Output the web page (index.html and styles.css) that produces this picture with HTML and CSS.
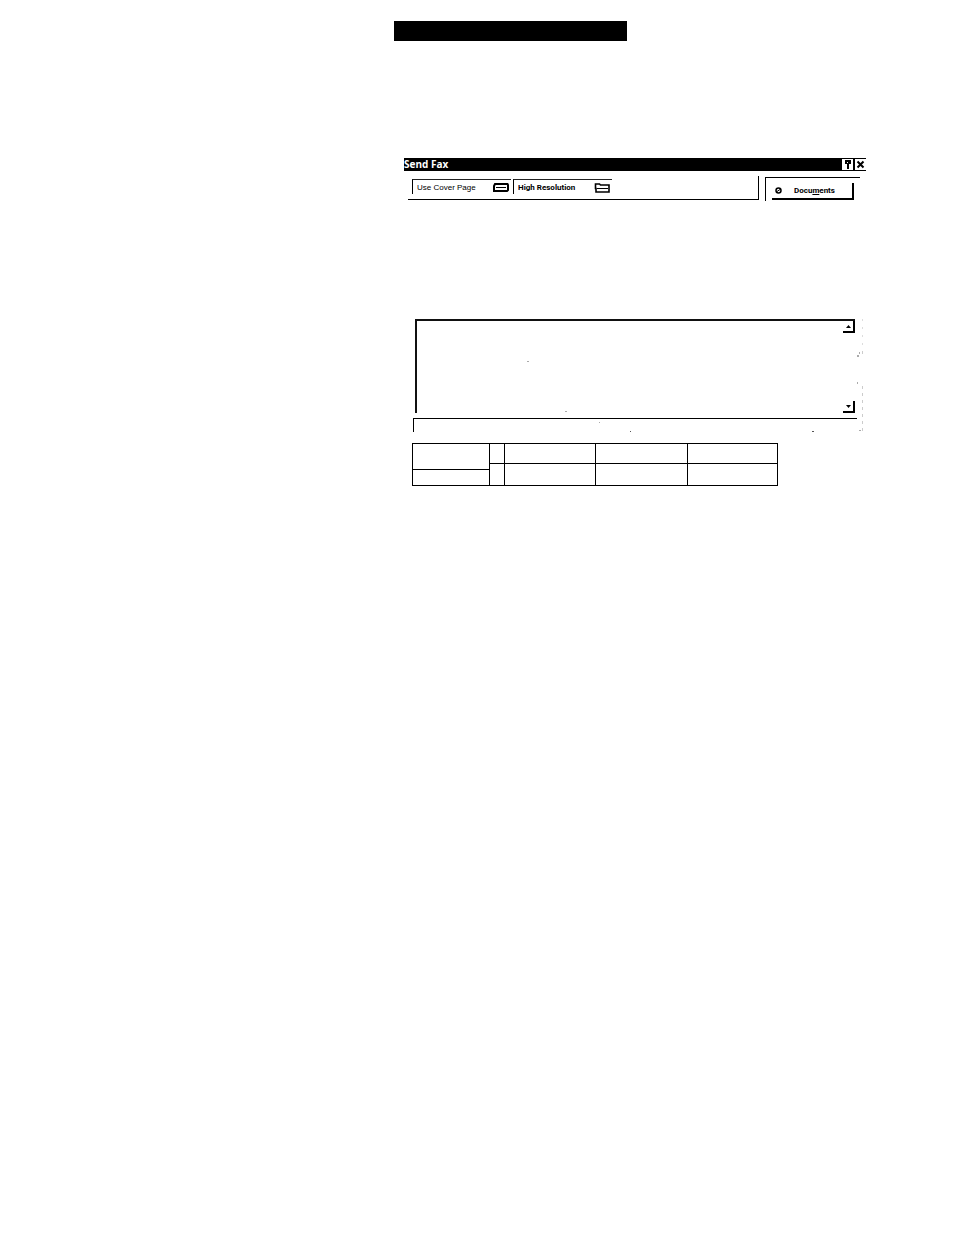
FILE: index.html
```
<!DOCTYPE html>
<html lang="en">
<head>
<meta charset="utf-8">
<title>Send Fax</title>
<link rel="stylesheet" href="styles.css">
</head>
<body>
<main class="page">
  <div class="page-banner"></div>
  <section class="dialog" aria-label="Send Fax">
    <header class="titlebar">
      <h1 class="title">Send Fax</h1>
      <div class="title-buttons">
        <button class="title-button" type="button" aria-label="Help"><svg width="11" height="11" viewBox="0 0 11 11"><path d="M3 1h6v4H7v1H5V5H3z" fill="#000"/><path d="M5 3h1v1H5z" fill="#fff"/><path d="M5 6h2v4H5z" fill="#000"/></svg></button>
        <button class="title-button" type="button" aria-label="Close"><svg width="11" height="11" viewBox="0 0 11 11"><path d="M2.500 2.500l6 6M8.500 2.500l-6 6" stroke="#000" stroke-width="2"/></svg></button>
      </div>
    </header>
    <div class="toolbar">
      <div class="options">
        <div class="field">
          <select class="select" aria-label="Cover page"><option>Use Cover Page</option></select>
          <svg class="drop" width="16" height="9" viewBox="0 0 16 9"><path d="M2 1h12.500L15 2v5l-1 1H1V3z" fill="#fff" stroke="#000" stroke-width="2"/><path d="M3 4.500h10" stroke="#000"/></svg>
        </div>
        <div class="field">
          <select class="select select-strong" aria-label="Resolution"><option>High Resolution</option></select>
          <svg class="drop" width="16" height="11" viewBox="0 0 16 11"><path d="M1.500 1h4l1 1h8.500v7H2V5.500h-.5z" fill="#fff" stroke="#000" stroke-width="1.600"/><path d="M3 5.500h11" stroke="#000"/></svg>
        </div>
      </div>
      <div class="documents">
        <button class="documents-button" type="button"><svg width="7" height="7" viewBox="0 0 7 7"><circle cx="3.500" cy="3.500" r="2.500" fill="#fff" stroke="#000" stroke-width="1.500"/><path d="M2 4.500l3-2" stroke="#000"/></svg><span>Docu<u>m</u>ents</span></button>
      </div>
    </div>
    <div class="message-panel">
      <div class="message">
        <textarea class="message-text" aria-label="Message"></textarea>
        <div class="scroll">
          <button class="scroll-button" type="button" aria-label="Scroll up"><svg width="5" height="3" viewBox="0 0 5 3"><path d="M0 3L2.500 0 5 3z"/></svg></button>
          <button class="scroll-button" type="button" aria-label="Scroll down"><svg width="5" height="3" viewBox="0 0 5 3"><path d="M0 0L2.500 3 5 0z"/></svg></button>
        </div>
      </div>
      <div class="status"></div>
      <svg class="specks" width="450" height="114" viewBox="0 0 450 114" fill="#aaa"><path d="M114 42h2v1h-2zM152 92h2v1h-2zM186 103h1v1h-1zM444 36h2v2h-2zM446 33h1v2h-1zM444 63h1v2h-1zM446 111h2v1h-2z"/><path d="M217 112h1v1h-1zM399 112h2v1h-2z" fill="#555"/><path d="M449.500 0v30" stroke="#ddd" stroke-dasharray="2 6"/><path d="M449.500 32v6M449.500 67v46" stroke="#ccc" stroke-dasharray="3 4"/></svg>
    </div>
    <table class="grid" aria-label="Recipients">
      <colgroup><col class="col-name"><col class="col-mark"><col class="col-first"><col class="col-second"><col></colgroup>
      <tbody>
        <tr class="row-top"><td rowspan="2"></td><td></td><td></td><td></td><td></td></tr>
        <tr class="row-mid"><td rowspan="2"></td><td rowspan="2"></td><td rowspan="2"></td><td rowspan="2"></td></tr>
        <tr class="row-end"><td></td></tr>
      </tbody>
    </table>
  </section>
</main>
</body>
</html>
```
FILE: styles.css
```
* { box-sizing: border-box; }

body {
  margin: 0;
  background: #fff;
  color: #000;
  font-family: "Liberation Sans", sans-serif;
  font-size: 8px;
  line-height: 12px;
}

svg { display: block; }

button, select, textarea {
  margin: 0;
  padding: 0;
  border: 0;
  border-radius: 0;
  background: #fff;
  color: #000;
  font: inherit;
  appearance: none;
}

.page { padding: 21px 88px 40px 394px; }

.page-banner {
  max-width: 233px;
  height: 20px;
  background: #000;
}

.dialog { margin: 117px 0 0 10px; }

.titlebar {
  display: flex;
  justify-content: space-between;
  height: 13px;
  background: #000;
}

.title {
  margin: 0;
  color: #fff;
  font-family: "Open Sans", sans-serif;
  font-size: 10px;
  font-weight: 700;
  line-height: 12px;
}

.title-buttons { display: flex; gap: 2px; padding-top: 1px; }
.title-button { width: 11px; height: 11px; }

.toolbar {
  display: flex;
  gap: 6px;
  padding: 5px 6px 0 4px;
}

.options {
  display: flex;
  flex: 1;
  gap: 2px;
  height: 24px;
  padding: 3px 0 0 4px;
  border-right: 1px solid #000;
  border-bottom: 1px solid #000;
}

.field {
  position: relative;
  width: 99px;
  height: 15px;
  border-top: 1px solid #222;
  border-left: 1px solid #000;
}

.select {
  width: 100%;
  height: 14px;
  padding: 2px 0 0 4px;
}

.select-strong, .documents-button {
  font-family: Roboto, "Liberation Sans", sans-serif;
  font-weight: 700;
}

.drop {
  position: absolute;
  top: 3px;
  right: 2px;
  pointer-events: none;
}

.documents {
  width: 95px;
  height: 24px;
  padding: 5px 6px 0;
  margin-top: 1px;
  border-top: 1px solid #000;
  border-left: 1px solid #000;
}

.documents-button {
  display: flex;
  align-items: center;
  gap: 12px;
  width: 100%;
  height: 17px;
  padding-left: 3px;
  border-right: 2px solid #000;
  border-bottom: 2px solid #000;
}

.message-panel {
  position: relative;
  margin: 118px 3px 0 9px;
}

.message {
  display: flex;
  height: 94px;
  margin: 0 8px 0 2px;
  border-top: 2px solid #111;
  border-left: 2px solid #111;
}

.message-text { flex: 1; resize: none; outline: 0; }

.scroll {
  display: flex;
  flex-direction: column;
  justify-content: space-between;
}

.scroll-button {
  display: flex;
  align-items: center;
  justify-content: center;
  width: 12px;
  height: 12px;
  border-right: 2px solid #000;
  border-bottom: 2px solid #000;
}

.status {
  height: 14px;
  margin: 5px 6px 0 0;
  border-top: 1px solid #000;
  border-left: 1px solid #000;
}

.specks {
  position: absolute;
  top: 0;
  right: 0;
  pointer-events: none;
}

.grid {
  width: 366px;
  margin: 11px 0 0 8px;
  border-collapse: collapse;
  table-layout: fixed;
}

.grid td { padding: 0; border: 1px solid #000; }
.col-name { width: 77px; }
.col-mark { width: 15px; }
.col-first { width: 91px; }
.col-second { width: 92px; }
.row-top { height: 20px; }
.row-mid { height: 6px; }
.row-end { height: 16px; }
```
